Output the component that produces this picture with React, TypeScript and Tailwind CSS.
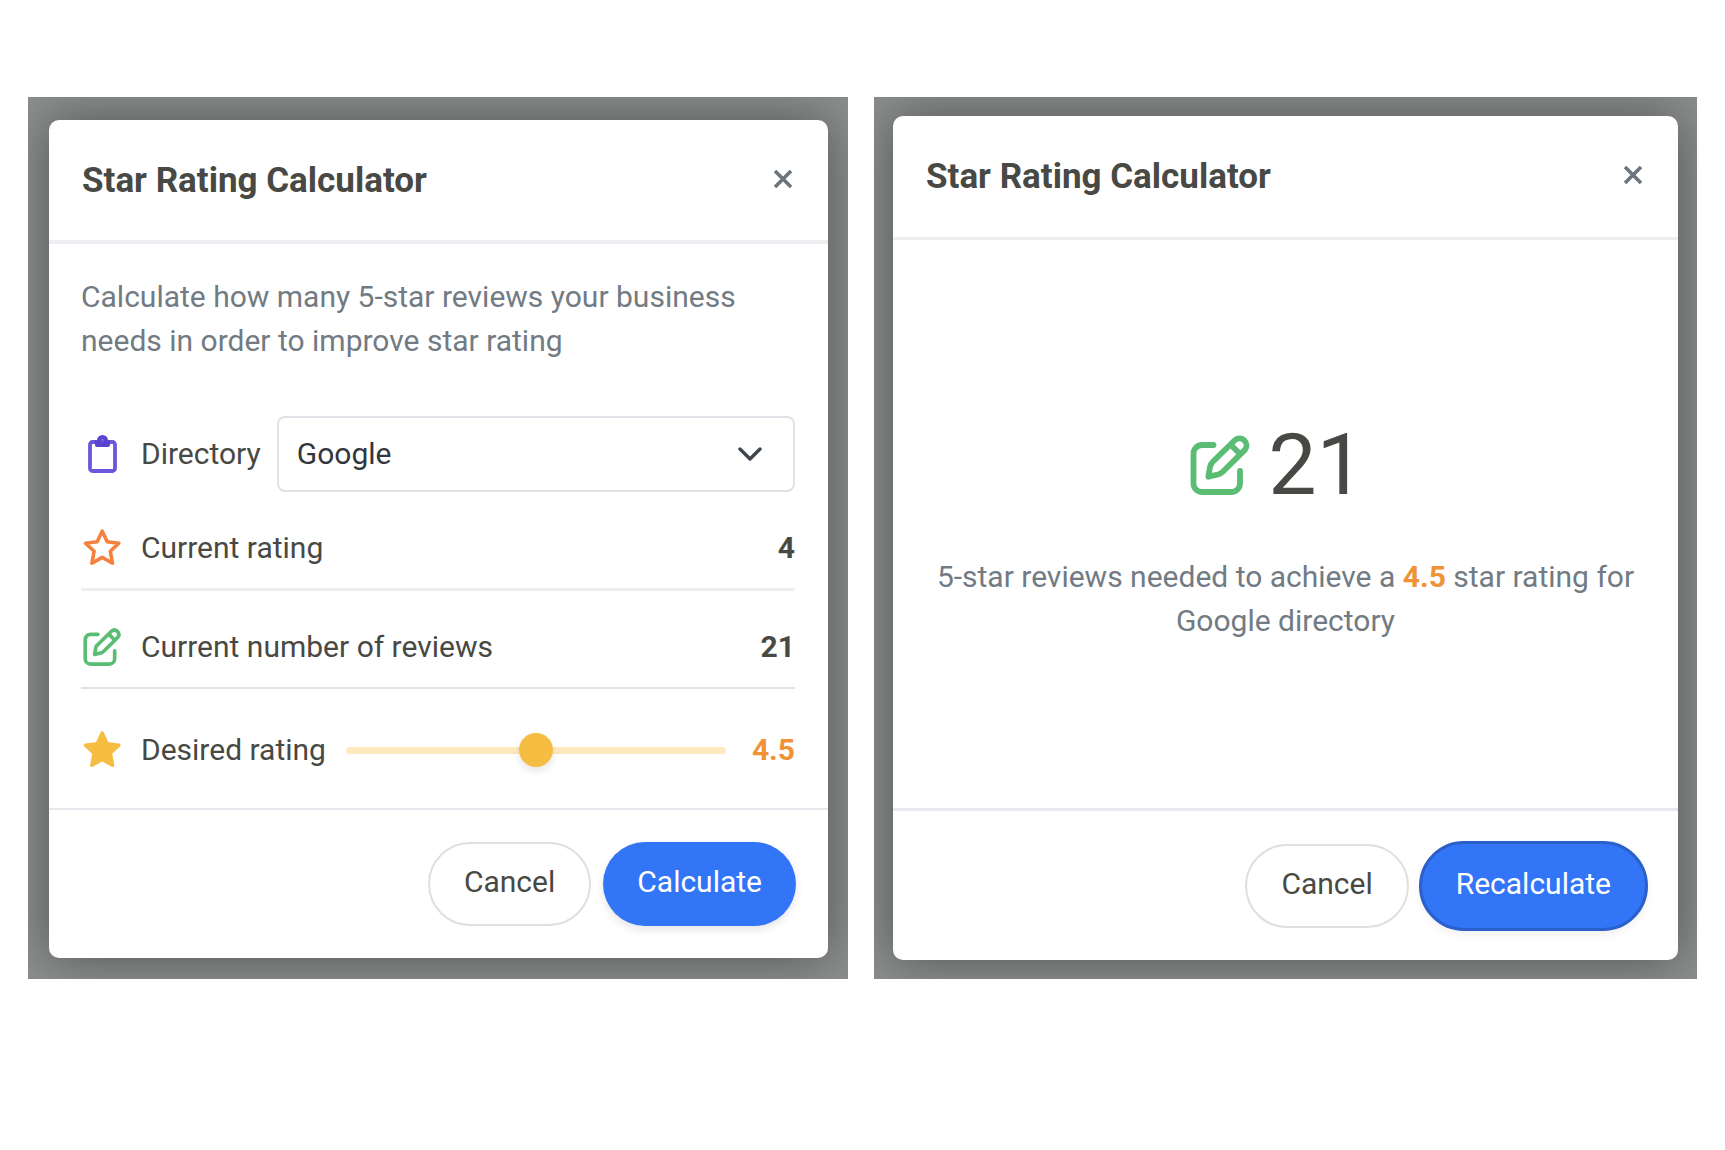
import { ReactNode, useState } from 'react';

const EditIcon = ({ className }: { className: string }) => (
  <svg viewBox="0 0 60 60" fill="none" stroke="currentColor" strokeWidth="5.8" strokeLinecap="round" strokeLinejoin="round" className={className}>
    <path d="M23.5 10H12a8.5 8.5 0 0 0-8.5 8.5v30A8.5 8.5 0 0 0 12 57h29.5a8.5 8.5 0 0 0 8.5-8.5V36" />
    <path d="M18.3 41.7l1.8-10.2q.6-2.8 2.7-4.7L45.3 4.8a7 7 0 0 1 9.8 9.8L32.8 36.8q-2 2-4.8 2.7z" />
    <path d="M41 10l9 9" />
  </svg>
);

const ClipboardIcon = ({ className }: { className: string }) => (
  <svg viewBox="0 0 38 38" fill="none" className={className}>
    <rect x="7" y="7" width="25" height="29" rx="2.5" stroke="#6b57db" strokeWidth="3.8" />
    <path fill="#5b43d0" fillRule="evenodd" d="M12 5.5h2a5.5 5.5 0 0 1 11 0h2V10a2 2 0 0 1-2 2H14a2 2 0 0 1-2-2zM19.5 4.5a1.6 1.6 0 1 0 0 3.2a1.6 1.6 0 0 0 0-3.2z" />
  </svg>
);

const StarIcon = ({ className, filled = false }: { className: string; filled?: boolean }) => (
  <svg viewBox="0 0 38 38" fill={filled ? 'currentColor' : 'none'} stroke="currentColor" strokeWidth="3.6" strokeLinejoin="round" className={className}>
    <path d="M19.2 2.2L24.2 12.8L35.8 14.3L27.3 22.3L29.5 34.2L19.2 28.4L8.9 34.2L11.1 22.3L2.6 14.3L14.2 12.8z" />
  </svg>
);

const CloseIcon = () => (
  <svg viewBox="0 0 18 18" fill="none" stroke="currentColor" strokeWidth="3.6" className="h-[18px] w-[18px]">
    <path d="M1 1l16 16M17 1L1 17" />
  </svg>
);

interface ModalProps {
  wrapperClass: string;
  headerClass: string;
  footerClass: string;
  footer: ReactNode;
  children: ReactNode;
}

const Modal = ({ wrapperClass, headerClass, footerClass, footer, children }: ModalProps) => (
  <div className={`flex overflow-hidden bg-[#8c8e8e] ${wrapperClass}`}>
    <section className="flex flex-1 flex-col rounded-[10px] bg-white shadow-[0_0_50px_rgba(0,0,0,0.42)]">
      <header className={`flex items-center justify-between border-[#eceef2] pr-9 pl-[33px] ${headerClass}`}>
        <h2 className="text-[35px] leading-[44px] font-bold">Star Rating Calculator</h2>
        <button type="button" aria-label="Close" className="mb-1 text-[#6c757d]">
          <CloseIcon />
        </button>
      </header>
      {children}
      <footer className={`flex items-center justify-end border-[#e6e9ed] ${footerClass}`}>{footer}</footer>
    </section>
  </div>
);

const CancelButton = () => (
  <button type="button" className="h-[84px] rounded-full border-2 border-[#dfdfdf] px-[34px] pb-1 text-[30px]">
    Cancel
  </button>
);

interface StatRowProps {
  icon: ReactNode;
  label: string;
  value: number;
  className: string;
}

const StatRow = ({ icon, label, value, className }: StatRowProps) => (
  <div className={`flex items-center ${className}`}>
    <span className="flex w-[60px] pl-0.5">{icon}</span>
    <span className="flex-1">{label}</span>
    <span className="font-bold">{value}</span>
  </div>
);

const App = () => {
  const [directory, setDirectory] = useState('Google');
  const [desired, setDesired] = useState(4.5);

  return (
    <main className="grid grid-cols-[820fr_823fr] gap-[26px] px-7 pt-[97px] pb-20 font-['Roboto',sans-serif] text-[30px] leading-[44px] text-[#484944]">
      <Modal
        wrapperClass="pt-[23px] pr-5 pb-[21px] pl-[21px]"
        headerClass="h-[124px] border-b-4 pt-0.5"
        footerClass="gap-3 border-t-2 pt-8 pr-8 pb-8"
        footer={
          <>
            <CancelButton />
            <button type="button" className="h-[84px] rounded-full bg-[#3375f7] px-[34px] pb-1 text-[30px] text-white shadow-[0_4px_8px_rgba(0,0,0,0.1)]">
              Calculate
            </button>
          </>
        }
      >
        <div className="flex-1 pt-[31px] pr-[33px] pl-8">
          <p className="max-w-[680px] text-[#727b83]">
            Calculate how many 5-star reviews your business needs in order to improve star rating
          </p>

          <div className="mt-[53px] flex items-center">
            <span className="flex w-[60px] pl-0.5">
              <ClipboardIcon className="h-[38px] w-[38px]" />
            </span>
            <label htmlFor="directory">Directory</label>
            <div className="relative ml-4 flex-1">
              <select
                id="directory"
                value={directory}
                onChange={(e) => setDirectory(e.target.value)}
                className="h-[76px] w-full appearance-none rounded-lg border-2 border-[#dfe3e7] bg-white px-[18px] text-[#33373d]"
              >
                <option>Google</option>
                <option>Facebook</option>
                <option>Yelp</option>
              </select>
              <svg viewBox="0 0 24 14" fill="none" stroke="currentColor" strokeWidth="3.4" strokeLinecap="round" strokeLinejoin="round" className="pointer-events-none absolute top-[31px] right-[33px] h-3.5 w-6 text-[#40464e]">
                <path d="M2 2l10 10L22 2" />
              </svg>
            </div>
          </div>

          <StatRow
            icon={<StarIcon className="h-[38px] w-[38px] text-[#f5813f]" />}
            label="Current rating"
            value={4}
            className="border-b-[3px] border-[#eceef2] pt-[34px] pb-[18px]"
          />
          <StatRow
            icon={<EditIcon className="h-[38px] w-[38px] text-[#5bbd74]" />}
            label="Current number of reviews"
            value={21}
            className="border-b-2 border-[#dfe2e8] pt-[34px] pb-[18px]"
          />

          <div className="flex items-center pt-[39px] pb-9">
            <span className="flex w-[60px] pl-0.5">
              <StarIcon filled className="h-[38px] w-[38px] text-[#f5bd42]" />
            </span>
            <label htmlFor="desired">Desired rating</label>
            <input
              id="desired"
              type="range"
              min={4}
              max={5}
              step={0.1}
              value={desired}
              onChange={(e) => setDesired(Number(e.target.value))}
              className="mr-[26px] ml-5 h-[7px] min-w-0 flex-1 appearance-none rounded-full bg-[#fde9bd] [&::-webkit-slider-thumb]:size-[34px] [&::-webkit-slider-thumb]:appearance-none [&::-webkit-slider-thumb]:rounded-full [&::-webkit-slider-thumb]:bg-[#f5bd42] [&::-webkit-slider-thumb]:shadow-[0_4px_8px_rgba(0,0,0,0.1)]"
            />
            <output htmlFor="desired" className="font-bold text-[#f09336]">{desired}</output>
          </div>
        </div>
      </Modal>

      <Modal
        wrapperClass="px-[19px] pt-[19px] pb-[19px]"
        headerClass="h-[124px] border-b-[3px]"
        footerClass="gap-2.5 border-t-[3px] pt-[30px] pr-[30px] pb-[29px]"
        footer={
          <>
            <CancelButton />
            <button type="button" className="h-[90px] rounded-full border-[3px] border-[#2b5fc9] bg-[#3375f7] px-[34px] pb-1 text-[30px] text-white shadow-[0_4px_8px_rgba(0,0,0,0.06)]">
              Recalculate
            </button>
          </>
        }
      >
        <div className="flex flex-1 flex-col items-center justify-center px-8 pt-2.5">
          <div className="flex items-center gap-[18px] pr-4">
            <EditIcon className="h-[60px] w-[60px] text-[#5bbd74]" />
            <strong className="text-[86px] leading-[100px] font-normal">21</strong>
          </div>
          <p className="mt-10 text-center text-[#727b83]">
            5-star reviews needed to achieve a <b className="text-[#f09336]">{desired}</b> star rating for {directory} directory
          </p>
        </div>
      </Modal>
    </main>
  );
};

export default App;
